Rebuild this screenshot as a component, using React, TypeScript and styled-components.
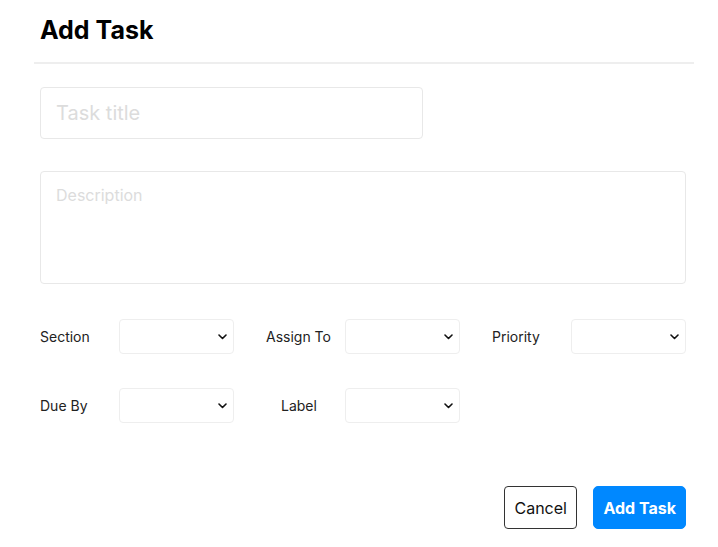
import React from 'react';
import styled, { createGlobalStyle } from 'styled-components';

const GlobalStyle = createGlobalStyle`
  html, body {
    margin: 0;
    padding: 0;
    background: #ffffff;
  }
  body {
    font-family: Inter, 'Liberation Sans', sans-serif;
    color: #111;
  }
`;

const Modal = styled.div`
  width: 660px;
  margin-left: 34px;
`;

const Header = styled.div`
  padding: 14px 6px 0;
  height: 64px;
  box-sizing: border-box;
  border-bottom: 2px solid #eeeeee;
`;

const Title = styled.h2`
  margin: 0;
  font-size: 25px;
  font-weight: 700;
  line-height: 32px;
  color: #000;
`;

const Form = styled.form`
  padding: 23px 8px 0 6px;
  display: flex;
  flex-direction: column;
`;

const TitleInput = styled.input`
  width: 383px;
  height: 52px;
  box-sizing: border-box;
  padding: 0 15px;
  border: 1px solid #e8e8e8;
  border-radius: 4px;
  font-family: inherit;
  font-size: 20px;
  outline: none;
  &::placeholder {
    color: #dcdcdc;
  }
`;

const Description = styled.textarea`
  margin-top: 32px;
  width: 646px;
  height: 113px;
  box-sizing: border-box;
  padding: 14px 15px;
  border: 1px solid #e8e8e8;
  border-radius: 4px;
  font-family: inherit;
  font-size: 16px;
  line-height: 1.2;
  resize: none;
  outline: none;
  &::placeholder {
    color: #dcdcdc;
  }
`;

const Fields = styled.div`
  margin-top: 35px;
  display: grid;
  grid-template-columns: repeat(3, 194px);
  column-gap: 32px;
  row-gap: 34px;
`;

const Field = styled.label`
  display: grid;
  grid-template-columns: 79px 115px;
  align-items: center;
`;

const FieldLabel = styled.span<{ $indent?: number }>`
  padding-left: ${(p) => p.$indent || 0}px;
  font-size: 14px;
  color: #222;
`;

const SelectWrap = styled.div`
  position: relative;
  width: 115px;
  height: 35px;
`;

const Select = styled.select`
  appearance: none;
  width: 100%;
  height: 100%;
  box-sizing: border-box;
  padding: 0 24px 0 8px;
  border: 1px solid #eeeeee;
  border-radius: 4px;
  background: #fff;
  font-family: inherit;
  font-size: 14px;
  color: #111;
  outline: none;
`;

const Chevron = styled.svg`
  position: absolute;
  right: 7px;
  top: 50%;
  margin-top: -3px;
  width: 9px;
  height: 6px;
  pointer-events: none;
`;

const Actions = styled.div`
  margin-top: 63px;
  display: flex;
  justify-content: flex-end;
  gap: 16px;
`;

const Button = styled.button<{ $primary?: boolean }>`
  height: 43px;
  padding: 0 ${(p) => (p.$primary ? 9 : 9.5)}px;
  border-radius: ${(p) => (p.$primary ? 5 : 4)}px;
  font-family: inherit;
  font-size: 16px;
  cursor: pointer;
  border: 1px solid ${(p) => (p.$primary ? '#0088ff' : '#333')};
  background: ${(p) => (p.$primary ? '#0088ff' : '#fff')};
  color: ${(p) => (p.$primary ? '#fff' : '#111')};
  font-weight: ${(p) => (p.$primary ? 700 : 400)};
`;

const fields = [
  { label: 'Section' },
  { label: 'Assign To' },
  { label: 'Priority' },
  { label: 'Due By' },
  { label: 'Label', indent: 15 },
];

const App: React.FC = () => {
  return (
    <>
      <GlobalStyle />
      <Modal>
        <Header>
          <Title>Add Task</Title>
        </Header>
        <Form onSubmit={(e) => e.preventDefault()}>
          <TitleInput placeholder="Task title" />
          <Description placeholder="Description" />
          <Fields>
            {fields.map((f) => (
              <Field key={f.label}>
                <FieldLabel $indent={f.indent}>{f.label}</FieldLabel>
                <SelectWrap>
                  <Select defaultValue="">
                    <option value=""></option>
                  </Select>
                  <Chevron viewBox="0 0 9 6">
                    <path
                      d="M1 1l3.5 3.5L8 1"
                      fill="none"
                      stroke="#111"
                      strokeWidth="1.6"
                      strokeLinecap="round"
                      strokeLinejoin="round"
                    />
                  </Chevron>
                </SelectWrap>
              </Field>
            ))}
          </Fields>
          <Actions>
            <Button type="button">Cancel</Button>
            <Button type="submit" $primary>
              Add Task
            </Button>
          </Actions>
        </Form>
      </Modal>
    </>
  );
};

export default App;
